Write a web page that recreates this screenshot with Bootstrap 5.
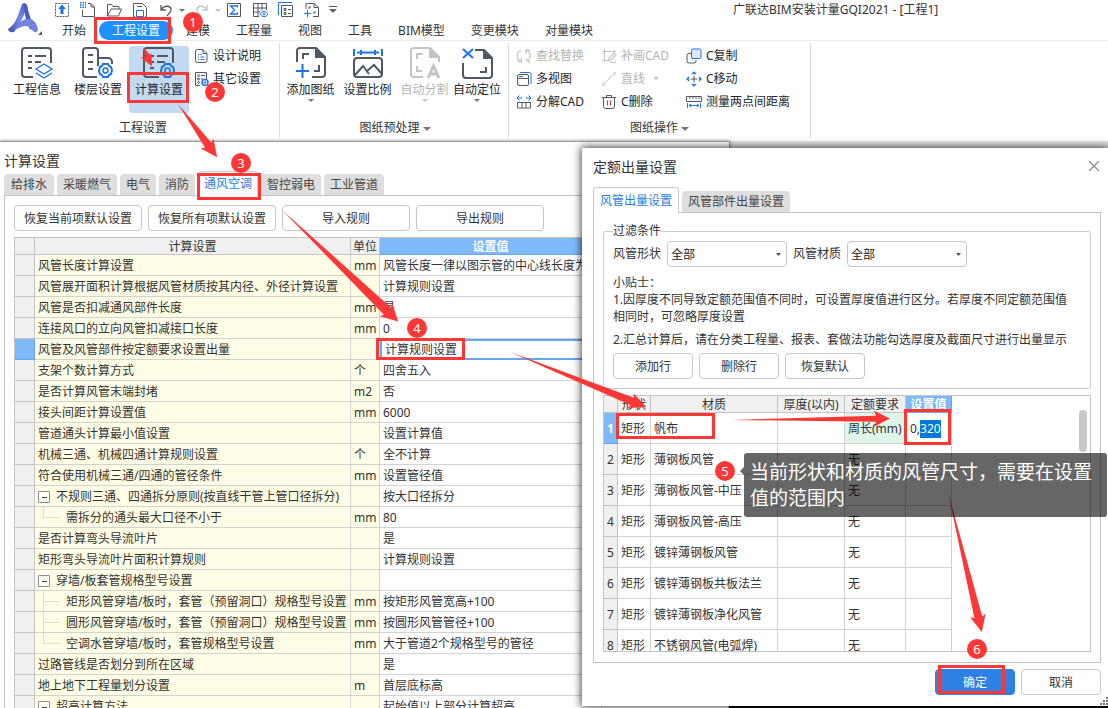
<!DOCTYPE html>
<html lang="zh-CN">
<head>
<meta charset="utf-8">
<meta name="viewport" content="width=device-width, initial-scale=1">
<title>广联达BIM安装计量GQI2021</title>
<link href="https://cdn.jsdelivr.net/npm/bootstrap@5.3.0/dist/css/bootstrap.min.css" rel="stylesheet">
<style>
  :root { --line:#cbcbcb; --mark:#fb3836; --sel:#80b9fa; --act:#2b7de3; --ink:#505866; }
  body { font:12px/18px "Noto Sans","Noto Sans CJK SC",sans-serif; color:#333; background:#fff; overflow:hidden; }
  svg { display:block; fill:none; flex-shrink:0; }
  button { color:inherit; }
  .gap-6 { gap:6px; }

  /* title bar and menu */
  .logo-box { width:49px; }
  .quick-bar { height:20px; }
  .quick-bar button { width:26px; }
  .app-title { padding-left:396px; line-height:20px; }
  .menu-tabs { height:20px; }
  .menu-tabs .nav-link { color:#333; padding:1px 13px 0; line-height:18px; height:19px; margin-top:1px; }
  .menu-tabs .nav-link.active { background:#1e90ff; color:#fff; border-radius:10px; }
  .app-head { border-bottom:1px solid #ececec; }

  /* ribbon */
  .ribbon { height:100px; padding-top:2px; }
  .ribbon .btn { font-size:12px; }
  .ribbon-group { height:95px; border-right:1px solid #dcdcdc; padding-top:1px; }
  .ribbon-body { height:74px; }
  .group-label { line-height:20px; }
  .group-label .tri { vertical-align:middle; }
  .big-btn { width:60px; height:67px; line-height:18px; border-radius:3px; padding-top:1px !important; margin-top:2px; display:flex; flex-direction:column; align-items:center; justify-content:flex-start; }
  .big-btn.mid { width:57px; }
  .big-btn.thin { width:48px; }
  .big-btn.chosen { background:#c3daf3; }
  .big-btn svg { margin-bottom:2px; }
  .tool-row { height:23px; gap:4px; line-height:18px; text-align:left; white-space:nowrap; }
  .off { color:#b4b4b4; }
  .tri { width:0; height:0; border:4px solid transparent; border-top-color:#777; border-bottom:0; display:inline-block; }
  .tri.tiny { border-width:3px 3px 0; }
  .tri.pale { border-top-color:#c4c4c4; }
  .g1 { width:280px; padding-left:7px; }
  .g1 .ribbon-body { gap:1px; }
  .g2 { width:229px; padding-left:2px; }
  .g3 { width:302px; }
  .g3 .ribbon-body { padding-left:7px; }
  .col-a { width:85px; }

  /* windows */
  .workspace { background:linear-gradient(#e4e4e4 0 20px,#000 20px); min-height:0; }
  .win { background:#fff; box-shadow:0 0 8px 1px rgba(0,0,0,.75); }
  .win-calc { left:0; top:1px; bottom:0; width:729px; box-shadow:0 0 3px 1px rgba(0,0,0,.5); }
  .win-calc .win-title { padding:9px 4px 0; }
  .win-calc .page-tabs { height:24px; }
  .win-calc .panel-box { border-bottom:0; }
  .win-quota { left:582px; right:0; top:7px; bottom:2px; }
  .win-title { font-size:14px; line-height:20px; }
  .page-tabs { gap:3px; }
  .page-tabs button { border:0; background:#dedede; border-radius:4px 4px 0 0; padding:0 6px; line-height:20px; height:21px; color:#444; }
  .page-tabs button.lead-tab { padding:0 7px; }
  .page-tabs button.active { background:#fff; color:var(--act); border:1px solid var(--line); border-bottom:0; height:25px; padding:0 5px; margin-bottom:-1px; position:relative; }
  .panel-box { border:1px solid #bfc3c9; }
  .win-btn { border:1px solid #c6c6c6; border-radius:4px; background:#fff; height:26px; line-height:18px; width:80px; padding:2px 0 0; }
  .win-btn.wide { width:128px; }
  .win-btn.main { background:#2d80e4; border-color:#2d80e4; color:#fff; }
  .calc-bar { padding:9px 9px 6px; }

  /* data tables */
  .grid-tb { table-layout:fixed; border-collapse:separate; border-spacing:0; line-height:18px; border-top:1px solid #c4c4c4; border-left:1px solid #c4c4c4; }
  .grid-tb th, .grid-tb td { border-right:1px solid #d2d2d2; border-bottom:1px solid #d2d2d2; padding:2px 3px 0; white-space:nowrap; overflow:hidden; }
  .grid-tb thead th { background:#f0f0f0; font-weight:400; text-align:center; height:17px; line-height:14px; padding:2px 0 0; border-color:#c4c4c4; }
  .grid-tb thead th.hot { background:var(--sel); color:#fff; font-weight:700; border-color:#66a6ea; }
  .grid-tb tbody th { background:#f0f0f0; font-weight:400; padding:2px 0 0; text-align:center; border-color:#c4c4c4; }
  .grid-tb tbody th.hot { background:var(--sel); color:#fff; font-weight:700; border-color:#66a6ea; }
  .calc-tb { width:588px; margin-left:9px; }
  .calc-tb tbody tr { height:21px; }
  .calc-tb td:nth-child(2), .calc-tb td:nth-child(3) { background:#fffde5; }
  .calc-tb td.editing { border:2px solid #66a6ea; border-right:0; padding:1px 3px 0; line-height:16px; }
  .quota-tb { width:348px; border:0; }
  .quota-tb tbody tr { height:31px; }
  .quota-tb .tint { background:#def6e9; }
  .quota-box { border:1px solid #c4c4c4; overflow:hidden; min-height:0; }
  .fold { width:12px; height:12px; border:1px solid #8c8c8c; border-radius:1px; background:#fffef4; padding:0; margin-right:6px; vertical-align:-1px; }
  .fold::after { content:""; display:block; width:5px; height:1px; background:#444; margin:0 auto; }
  .twig { display:inline-block; width:17px; height:20px; margin:-2px 6px 0 5px; vertical-align:top; background:linear-gradient(#dcdcdc,#dcdcdc) 0 10px/17px 1px no-repeat, linear-gradient(#dcdcdc,#dcdcdc) 0 0/1px 21px no-repeat; }
  .twig.end { background-size:17px 1px,1px 10px; }
  .val-edit { width:100%; height:18px; border:0; padding:0 0 0 1px; outline:0; color:#333; display:block; }
  .val-edit::selection { background:#0078d7; color:#fff; }

  /* quota dialog */
  .quota-title { padding:9px 11px 0; }
  .quota-tabs { height:35px; padding-left:11px; }
  .quota-tabs button.roomy { height:26px; padding:0 6px; line-height:24px; }
  .quota-panel { margin:0 7px 0 11px; padding:18px 9px 10px; min-height:0; }
  .filter-set { border:1px solid var(--line); border-radius:3px; padding:1px 9px 9px; margin:-9px 0 6px; }
  .filter-set legend { float:none; width:auto; font-size:12px; line-height:18px; margin:0; padding:0; }
  .form-select.pick { width:120px; height:26px; font-size:12px; line-height:18px; padding:1px 20px 0 3px; border-color:#c6c6c6; border-radius:4px; color:#222;
    background-image:url("data:image/svg+xml,%3csvg xmlns='http://www.w3.org/2000/svg' viewBox='0 0 5 3'%3e%3cpath fill='%23555' d='M0 0h5L2.5 3z'/%3e%3c/svg%3e"); background-size:5px 3px; background-position:right 5px center; }
  .tips { line-height:17px; margin:7px 0 0; }
  .tips.tips-last { margin:6px 0 5px; }
  .quota-foot { padding:6px 7px 11px; }
  .close-x { right:8px; top:12px; }
  .scroll-bar { width:8px; height:42px; border-radius:4px; background:#c8c8c8; right:3px; top:14px; }
  .grip { fill:#777; }

  /* callouts */
  .marks { inset:0; pointer-events:none; z-index:20; }
  .dot { width:20px; height:20px; border-radius:50%; background:var(--mark); color:#fff; font-size:13px; line-height:20px; text-align:center; }
  .hint { left:744px; top:453px; width:363px; background:rgba(0,0,0,.6); color:#fff; font-size:19px; line-height:26px; padding:6px; border-radius:3px; }
  .hint::before { content:""; position:absolute; left:-4px; top:14px; border:4px solid transparent; border-right-color:rgba(0,0,0,.6); border-left:0; }
</style>
</head>
<body class="vh-100 d-flex flex-column position-relative">

<header class="app-head d-flex">
  <div class="logo-box">
    <svg width="49" height="40"><defs><linearGradient id="lg" x1="0" y1="1" x2="1" y2="0"><stop offset="0" stop-color="#3f4fae"/><stop offset=".55" stop-color="#7a8be8"/><stop offset="1" stop-color="#4557b8"/></linearGradient></defs>
      <path d="M8 29C16 25 19 12 22 4q2-2 5 1c-2 9-7 20-13 27q-5 1-6-3z" fill="url(#lg)"/><path d="M24 3q4 1 4 7l5 16q0 5-3 3c-3-5-6-14-6-26z" fill="#4a59bd"/><path d="M14 31c3-8 10-13 17-12q6 3 7 11-2 4-5 1c-4-6-9-7-19 0z" fill="#7282e2"/><path d="M42 31v4h-4z" fill="#555"/></svg>
  </div>
  <div class="flex-grow-1">
    <div class="quick-bar d-flex align-items-center">
      <button class="btn border-0 p-0" aria-label="导出"><svg class="mx-auto" width="16" height="16" stroke="#505866"><path d="M1.500 1.500h13v13h-13z" stroke-dasharray="2 1"/><path d="M8 2.500l4 4.500H9.500V12h-3V7H4z" fill="#1e73e8" stroke="none"/></svg></button>
      <button class="btn border-0 p-0" aria-label="新建"><svg class="mx-auto" width="16" height="16" stroke="#505866"><path d="M8 1.500h3l3.500 3.500v9.500h-12V8M11 1.500V5h3.500"/><path d="M0 .8h6M0 3h6M0 5.200h6" stroke="#1e73e8" stroke-width="1.500" stroke-dasharray="1.500 1"/></svg></button>
      <button class="btn border-0 p-0" aria-label="打开"><svg class="mx-auto" width="16" height="16" stroke="#505866"><path d="M1.500 14V2.500h4l1.500 2h6V7M1.500 14L5 7h10.500L12.500 14z"/></svg></button>
      <button class="btn border-0 p-0" aria-label="保存"><svg class="mx-auto" width="16" height="16" stroke="#505866"><path d="M3 14.500H1.500v-13h9l4 4v9H13M5 4.500h5"/><path d="M4.500 14.500v-6h7v6z" stroke="#1e73e8"/></svg></button>
      <button class="btn border-0 p-0" aria-label="撤销"><svg class="mx-auto" width="16" height="16" stroke="#505866" stroke-width="1.300"><path d="M3 3v5h5M3 8C6 3 13 3 13 8c0 3-3 4-4 6"/></svg></button>
      <span class="tri tiny"></span>
      <button class="btn border-0 p-0 ms-1" aria-label="重做"><svg class="mx-auto" width="16" height="16" stroke="#c4c4c4" stroke-width="1.300"><path d="M13 3v5H8M13 8C10 3 3 3 3 8c0 3 3 4 4 6"/></svg></button>
      <span class="tri tiny pale"></span>
      <button class="btn border-0 p-0" aria-label="汇总"><svg class="mx-auto" width="16" height="16" stroke="#505866"><path d="M1.500 1.500h13v13h-13z"/><path d="M11.500 5.500V4h-7l4 4-4 4h7v-1.500" stroke="#1e73e8" stroke-width="1.300"/></svg></button>
      <button class="btn border-0 p-0" aria-label="查看"><svg class="mx-auto" width="16" height="16" stroke="#505866"><path d="M7 14.500H1.500v-13h13V8M1.500 6h13M1.500 10H8M6 1.500v13M10 1.500V8"/><path d="M8 12c2-3.500 6-3.500 8 0-2 3.500-6 3.500-8 0z" fill="#fff" stroke="#1e73e8"/><circle cx="12" cy="12" r="1" stroke="#1e73e8"/></svg></button>
      <button class="btn border-0 p-0" aria-label="列表"><svg class="mx-auto" width="16" height="16" stroke="#505866"><path d="M3.500 3.500h11v11h-11z"/><path d="M.5 13V.5H14" stroke="#1e73e8"/><path d="M6 6.500h2v2H6zM6 10.500h2v2H6zM10 7.500h3M10 11.500h3"/></svg></button>
      <button class="btn border-0 p-0" aria-label="添加"><svg class="mx-auto" width="16" height="16" stroke="#505866"><path d="M2 7V1.500h8l4.500 4v9H9M10 1.500v4h4.500M5 7V5h2M11 9v2H9"/><path d="M0 11.500h7M3.500 8v7" stroke="#1e73e8"/></svg></button>
      <svg class="ms-1" width="8" height="10"><path d="M0 1.500h8" stroke="#555"/><path d="M0 4h8L4 8z" fill="#666"/></svg>
      <span class="app-title text-nowrap">广联达BIM安装计量GQI2021 - [工程1]</span>
    </div>
    <nav class="nav menu-tabs flex-nowrap text-nowrap">
      <a class="nav-link" href="#">开始</a><a class="nav-link active" href="#">工程设置</a><a class="nav-link" href="#">建模</a><a class="nav-link" href="#">工程量</a><a class="nav-link" href="#">视图</a><a class="nav-link" href="#">工具</a><a class="nav-link" href="#">BIM模型</a><a class="nav-link" href="#">变更模块</a><a class="nav-link" href="#">对量模块</a>
    </nav>
  </div>
</header>

<section class="ribbon d-flex flex-shrink-0">
  <div class="ribbon-group g1">
    <div class="ribbon-body d-flex">
      <button class="btn border-0 p-0 big-btn"><svg width="32" height="32" stroke="#505866" stroke-width="2"><path d="M12 30H4a3 3 0 0 1-3-3V4a3 3 0 0 1 3-3h23a3 3 0 0 1 3 3v12M7 9h4M14 9h11M7 15h4M14 15h6M7 21h4"/><path d="M15 22l8-5 8 5-8 5zM15 26l8 5 8-5" stroke="#1e73e8" stroke-width="1.300"/></svg>工程信息</button>
      <button class="btn border-0 p-0 big-btn"><svg width="32" height="32" stroke="#505866" stroke-width="2"><path d="M15 30H4a3 3 0 0 1-3-3V4a3 3 0 0 1 3-3h9a3 3 0 0 1 3 3v15M16 11h10a4 4 0 0 1 4 4v2M6 8h5M6 15h5M6 22h5"/><path d="M18 20l2-1 1-2h5l1 2 2 1 1 3-1 4-2 1-1 2h-5l-1-2-2-1-1-3z" stroke="#1e73e8"/><circle cx="23.500" cy="23.500" r="2.500" stroke="#1e73e8" stroke-width="1.500"/></svg>楼层设置</button>
      <button class="btn border-0 p-0 big-btn chosen"><svg width="32" height="32" stroke="#505866" stroke-width="2"><path d="M16 30H4a3 3 0 0 1-3-3V4a3 3 0 0 1 3-3h23a3 3 0 0 1 3 3v12M7 9h4M14 9h11M7 15h4M14 15h8M7 21h4"/><path d="M19 20l2-1 1-2h5l1 2 2 1 1 3-1 4-2 1-1 2h-5l-1-2-2-1-1-3z" stroke="#1e73e8"/><circle cx="24.500" cy="23.500" r="2.500" stroke="#1e73e8" stroke-width="1.500"/></svg>计算设置</button>
      <div class="ps-1">
        <button class="btn border-0 p-0 tool-row d-flex align-items-center"><svg width="15" height="16" stroke="#505866"><path d="M1.500 3a2 2 0 0 1 2-1.500H9l4 4V13a2 2 0 0 1-2 1.500H3.500a2 2 0 0 1-2-2zM9 1.500v4h4"/><path d="M4 6.500h1M6.500 6.500H8M4 9h1M6.500 9h4M4 11.500h1M6.500 11.500h4" stroke="#1e73e8"/></svg>设计说明</button>
        <button class="btn border-0 p-0 tool-row d-flex align-items-center"><svg width="15" height="16" stroke="#505866"><path d="M6 14.500H1.500v-13h11V8"/><circle cx="4.500" cy="4.500" r="1"/><circle cx="4.500" cy="8" r="1"/><circle cx="4.500" cy="11.500" r="1"/><path d="M7 4.500h4M7 8h2"/><circle cx="11" cy="11.500" r="3" stroke="#1e73e8" stroke-width="1.500"/><circle cx="11" cy="11.500" r="1" stroke="#1e73e8"/></svg>其它设置</button>
      </div>
    </div>
    <div class="group-label text-center">工程设置</div>
  </div>

  <div class="ribbon-group g2">
    <div class="ribbon-body d-flex">
      <button class="btn border-0 p-0 big-btn mid"><svg width="32" height="32" stroke="#505866" stroke-width="2"><path d="M2 15V4a3 3 0 0 1 3-3h16l9 9v17a3 3 0 0 1-3 3H17M8 12V7h6M24 18v6h-5"/><path d="M21 2l8 8h-8z" fill="#505866"/><path d="M1 24h13M7.500 17v14" stroke="#1e73e8"/></svg>添加图纸<span class="tri tiny"></span></button>
      <button class="btn border-0 p-0 big-btn mid"><svg width="32" height="32" stroke="#505866" stroke-width="2"><rect x="2" y="11" width="28" height="19" rx="3"/><path d="M3 28l8-9 6 8M15 24l7-6 8 9"/><path d="M2 2v7M30 2v7M5 5.500h22M9 3v5M23 3v5" stroke="#1e73e8"/></svg>设置比例</button>
      <button class="btn border-0 p-0 big-btn mid off"><svg width="32" height="32" stroke="#c4c4c4" stroke-width="2"><path d="M14 30H5a3 3 0 0 1-3-3V4a3 3 0 0 1 3-3h16l9 9v5M8 12V7h6M8 19v5h5"/><path d="M21 2l8 8h-8z" fill="#c4c4c4"/><path d="M19 31l5.500-12L30 31M21 27h7" stroke-width="3"/></svg>自动分割<span class="tri tiny pale"></span></button>
      <button class="btn border-0 p-0 big-btn thin"><svg width="32" height="32" stroke="#505866" stroke-width="2"><path d="M2 16v12a3 3 0 0 0 3 3h23a3 3 0 0 0 3-3V11l-8-8h-9M25 20v5h-6"/><path d="M23 4l7 7h-7z" fill="#505866"/><path d="M2 2l10 9M12 2L2 11" stroke="#1e73e8"/></svg>自动定位<span class="tri tiny"></span></button>
    </div>
    <div class="group-label text-center">图纸预处理 <span class="tri"></span></div>
  </div>

  <div class="ribbon-group g3">
    <div class="ribbon-body d-flex">
      <div class="col-a">
        <button class="btn border-0 p-0 tool-row d-flex align-items-center off"><svg width="16" height="16" stroke="#c4c4c4" stroke-width="1.300"><path d="M5 14C0 11 0 4 5 2M1.500 13.500H5.500V10M10 2c5 2 5 8 2 11M14 2h-4v4M10 11l4 4"/></svg>查找替换</button>
        <button class="btn border-0 p-0 tool-row d-flex align-items-center"><svg width="16" height="16" stroke="#505866"><rect x="1.500" y="3.500" width="11" height="11" rx="1.500"/><path d="M1.500 7.500h11M3 5.500h4"/><path d="M4 1.500h9a2 2 0 0 1 2 2V13" stroke="#1e73e8"/></svg>多视图</button>
        <button class="btn border-0 p-0 tool-row d-flex align-items-center"><svg width="16" height="16" stroke="#505866"><path d="M1.500 8.500h13v5.500h-13zM6 8.500V14M10 8.500V14"/><path d="M1 4h5M3.500 1.500L1 4l2.500 2.500M15 4h-5M12.500 1.500L15 4l-2.500 2.500" stroke="#1e73e8"/></svg>分解CAD</button>
      </div>
      <div class="col-a">
        <button class="btn border-0 p-0 tool-row d-flex align-items-center off"><svg width="16" height="16" stroke="#c4c4c4" stroke-width="1.200"><path d="M3.500 1v12.500M1 3.500h13M13.500 2v3M1 12.500h5M7 13l1-3 5-5 2 2-5 5zM9 14.500h6"/></svg>补画CAD</button>
        <button class="btn border-0 p-0 tool-row d-flex align-items-center off"><svg width="16" height="16" stroke="#c4c4c4"><path d="M3 13L13 3"/><circle cx="2.500" cy="13.500" r="1"/><circle cx="13.500" cy="2.500" r="1"/></svg>直线<span class="tri tiny pale ms-1"></span></button>
        <button class="btn border-0 p-0 tool-row d-flex align-items-center"><svg width="16" height="16" stroke="#505866"><path d="M1 3.500h14M5.500 3V1.500h5V3M2.500 3.500v9a2 2 0 0 0 2 2h7a2 2 0 0 0 2-2v-9"/><path d="M6.500 6.500v5M9.500 6.500v5" stroke="#d33"/></svg>C删除</button>
      </div>
      <div>
        <button class="btn border-0 p-0 tool-row d-flex align-items-center"><svg width="16" height="16" stroke="#505866"><path d="M5 5.500H3a2 2 0 0 0-2 2V13a2 2 0 0 0 2 2h5a2 2 0 0 0 2-2v-1"/><rect x="5.500" y="1" width="9.500" height="9.500" rx="1.500" fill="#dceafc" stroke="#1e73e8"/></svg>C复制</button>
        <button class="btn border-0 p-0 tool-row d-flex align-items-center"><svg width="16" height="16" stroke="#1e73e8"><path d="M8 4.500v7M4.500 8h7" stroke="#505866"/><path d="M8 1v2M6 3l2-2 2 2M8 15v-2M6 13l2 2 2-2M1 8h2M3 6L1 8l2 2M15 8h-2M13 6l2 2-2 2" stroke-width="1.200"/></svg>C移动</button>
        <button class="btn border-0 p-0 tool-row d-flex align-items-center"><svg width="16" height="16" stroke="#505866"><path d="M.5 2.500h15v5H.5zM4 2.500V5M7 2.500V5M10 2.500V5M13 2.500V5"/><path d="M1.500 9v5M14.500 9v5M3 11.500h10M5 10l-2 1.500L5 13M11 10l2 1.500-2 1.500" stroke="#1e73e8"/></svg>测量两点间距离</button>
      </div>
    </div>
    <div class="group-label text-center">图纸操作 <span class="tri"></span></div>
  </div>
</section>

<main class="workspace flex-grow-1 position-relative">
  <section class="win win-calc position-absolute d-flex flex-column" aria-label="计算设置">
    <h1 class="win-title fw-normal mb-0">计算设置</h1>
    <div class="page-tabs d-flex align-items-end ps-1 flex-shrink-0" role="tablist">
      <button class="lead-tab">给排水</button><button>采暖燃气</button><button>电气</button><button>消防</button><button class="active">通风空调</button><button>智控弱电</button><button>工业管道</button>
    </div>
    <div class="panel-box ms-1 flex-grow-1 overflow-hidden">
      <div class="d-flex gap-6 calc-bar">
        <button class="win-btn wide">恢复当前项默认设置</button><button class="win-btn wide">恢复所有项默认设置</button><button class="win-btn wide">导入规则</button><button class="win-btn wide">导出规则</button>
      </div>
      <table class="grid-tb calc-tb">
        <colgroup><col style="width:20px"><col style="width:316px"><col style="width:29px"><col></colgroup>
        <thead><tr><th></th><th>计算设置</th><th>单位</th><th class="hot">设置值</th></tr></thead>
        <tbody>
          <tr><th></th><td>风管长度计算设置</td><td>mm</td><td>风管长度一律以图示管的中心线长度为准</td></tr>
          <tr><th></th><td>风管展开面积计算根据风管材质按其内径、外径计算设置</td><td></td><td>计算规则设置</td></tr>
          <tr><th></th><td>风管是否扣减通风部件长度</td><td>mm</td><td>是</td></tr>
          <tr><th></th><td>连接风口的立向风管扣减接口长度</td><td>mm</td><td>0</td></tr>
          <tr><th class="hot"></th><td>风管及风管部件按定额要求设置出量</td><td></td><td class="editing">计算规则设置</td></tr>
          <tr><th></th><td>支架个数计算方式</td><td>个</td><td>四舍五入</td></tr>
          <tr><th></th><td>是否计算风管末端封堵</td><td>m2</td><td>否</td></tr>
          <tr><th></th><td>接头间距计算设置值</td><td>mm</td><td>6000</td></tr>
          <tr><th></th><td>管道通头计算最小值设置</td><td></td><td>设置计算值</td></tr>
          <tr><th></th><td>机械三通、机械四通计算规则设置</td><td>个</td><td>全不计算</td></tr>
          <tr><th></th><td>符合使用机械三通/四通的管径条件</td><td>mm</td><td>设置管径值</td></tr>
          <tr><th></th><td><button class="fold" aria-label="折叠"></button>不规则三通、四通拆分原则(按直线干管上管口径拆分)</td><td></td><td>按大口径拆分</td></tr>
          <tr><th></th><td><i class="twig end"></i>需拆分的通头最大口径不小于</td><td>mm</td><td>80</td></tr>
          <tr><th></th><td>是否计算弯头导流叶片</td><td></td><td>是</td></tr>
          <tr><th></th><td>矩形弯头导流叶片面积计算规则</td><td></td><td>计算规则设置</td></tr>
          <tr><th></th><td><button class="fold" aria-label="折叠"></button>穿墙/板套管规格型号设置</td><td></td><td></td></tr>
          <tr><th></th><td><i class="twig"></i>矩形风管穿墙/板时，套管（预留洞口）规格型号设置</td><td>mm</td><td>按矩形风管宽高+100</td></tr>
          <tr><th></th><td><i class="twig"></i>圆形风管穿墙/板时，套管（预留洞口）规格型号设置</td><td>mm</td><td>按圆形风管管径+100</td></tr>
          <tr><th></th><td><i class="twig end"></i>空调水管穿墙/板时，套管规格型号设置</td><td>mm</td><td>大于管道2个规格型号的管径</td></tr>
          <tr><th></th><td>过路管线是否划分到所在区域</td><td></td><td>是</td></tr>
          <tr><th></th><td>地上地下工程量划分设置</td><td>m</td><td>首层底标高</td></tr>
          <tr><th></th><td><button class="fold" aria-label="折叠"></button>超高计算方法</td><td></td><td>起始值以上部分计算超高</td></tr>
        </tbody>
      </table>
    </div>
  </section>

  <section class="win win-quota position-absolute d-flex flex-column" aria-label="定额出量设置">
    <h2 class="win-title fw-normal mb-0 quota-title">定额出量设置</h2>
    <button class="btn border-0 p-0 close-x position-absolute" aria-label="关闭"><svg width="12" height="12" stroke="#888" stroke-width="1.200"><path d="M1 1l10 10M11 1L1 11"/></svg></button>
    <div class="page-tabs d-flex align-items-end flex-shrink-0 quota-tabs" role="tablist">
      <button class="active roomy">风管出量设置</button><button>风管部件出量设置</button>
    </div>
    <div class="panel-box quota-panel flex-grow-1 d-flex flex-column">
      <fieldset class="filter-set">
        <legend>过滤条件</legend>
        <div class="d-flex align-items-center gap-6">
          <label for="shape">风管形状</label><select id="shape" class="form-select pick"><option>全部</option></select>
          <label for="mat">风管材质</label><select id="mat" class="form-select pick"><option>全部</option></select>
        </div>
        <p class="tips">小贴士：<br>1.因厚度不同导致定额范围值不同时，可设置厚度值进行区分。若厚度不同定额范围值<br>相同时，可忽略厚度设置</p>
        <p class="tips tips-last text-nowrap">2.汇总计算后，请在分类工程量、报表、套做法功能勾选厚度及截面尺寸进行出量显示</p>
        <div class="d-flex gap-6"><button class="win-btn">添加行</button><button class="win-btn">删除行</button><button class="win-btn">恢复默认</button></div>
      </fieldset>
      <div class="quota-box flex-grow-1 position-relative">
        <table class="grid-tb quota-tb">
          <colgroup><col style="width:14px"><col style="width:33px"><col style="width:127px"><col style="width:67px"><col style="width:61px"><col></colgroup>
          <thead><tr><th></th><th>形状</th><th>材质</th><th>厚度(以内)</th><th>定额要求</th><th class="hot">设置值</th></tr></thead>
          <tbody>
            <tr><th class="hot">1</th><td>矩形</td><td>帆布</td><td></td><td class="tint">周长(mm)</td><td><input id="val" class="val-edit" value="0,320" aria-label="设置值"></td></tr>
            <tr><th>2</th><td>矩形</td><td>薄钢板风管</td><td></td><td>无</td><td></td></tr>
            <tr><th>3</th><td>矩形</td><td>薄钢板风管-中压</td><td></td><td>无</td><td></td></tr>
            <tr><th>4</th><td>矩形</td><td>薄钢板风管-高压</td><td></td><td>无</td><td></td></tr>
            <tr><th>5</th><td>矩形</td><td>镀锌薄钢板风管</td><td></td><td>无</td><td></td></tr>
            <tr><th>6</th><td>矩形</td><td>镀锌薄钢板共板法兰</td><td></td><td>无</td><td></td></tr>
            <tr><th>7</th><td>矩形</td><td>镀锌薄钢板净化风管</td><td></td><td>无</td><td></td></tr>
            <tr><th>8</th><td>矩形</td><td>不锈钢风管(电弧焊)</td><td></td><td>无</td><td></td></tr>
          </tbody>
        </table>
        <div class="scroll-bar position-absolute"></div>
      </div>
    </div>
    <div class="d-flex justify-content-end gap-6 quota-foot"><button class="win-btn main">确定</button><button class="win-btn">取消</button></div>
    <svg class="grip position-absolute end-0 bottom-0" width="8" height="9"><path d="M6 0h2v2H6zM3 3h2v2H3zM6 3h2v2H6zM0 6h2v2H0zM3 6h2v2H3zM6 6h2v2H6z"/></svg>
  </section>
</main>

<!-- step callouts lying over the windows -->
<div class="marks position-absolute">
  <svg class="position-absolute w-100 h-100">
    <g fill="#fb3836">
      <path transform="translate(144 48) rotate(66.500)" d="M0 0L9-3 7-5 20 0 7 7 9 3z"/>
      <path transform="translate(178 104) rotate(53.700)" d="M0 0L51-4 49-8 66 0 49 8 51 4z"/>
      <path transform="translate(282 210) rotate(43.800)" d="M0 0L146-5 144-9 161 0 144 9 146 5z"/>
      <path transform="translate(510 352) rotate(22)" d="M0 0L132-4 130-8 147 0 130 8 132 4z"/>
      <path transform="translate(732 420) rotate(-.5)" d="M0 0L144-3 142-8 158 0 142 8 144 3z"/>
      <path transform="translate(948 492) rotate(76.400)" d="M0 0L129-4 127-8 144 0 127 8 129 4z"/>
    </g>
    <g stroke="#fb3836" stroke-width="3">
      <path d="M95.500 18.500h74v24h-74zM128.500 73.500h59v28h-59zM198.500 174.500h61v24h-61zM377.500 339.500h86v19h-86zM617.500 414.500h96v23h-96zM905.500 410.500h44v33h-44zM939.500 666.500h64v26h-64z"/>
    </g>
  </svg>
  <span class="dot position-absolute" style="left:183px;top:12px">1</span>
  <span class="dot position-absolute" style="left:205px;top:82px">2</span>
  <span class="dot position-absolute" style="left:231px;top:153px">3</span>
  <span class="dot position-absolute" style="left:407px;top:318px">4</span>
  <span class="dot position-absolute" style="left:715px;top:461px">5</span>
  <span class="dot position-absolute" style="left:967px;top:639px">6</span>
  <div class="hint position-absolute">当前形状和材质的风管尺寸，需要在设置值的范围内</div>
</div>

<script src="https://cdn.jsdelivr.net/npm/bootstrap@5.3.0/dist/js/bootstrap.bundle.min.js"></script>
<script>
  const val = document.getElementById('val');
  val.focus({ preventScroll: true });
  val.setSelectionRange(2, 5);
</script>
</body>
</html>
